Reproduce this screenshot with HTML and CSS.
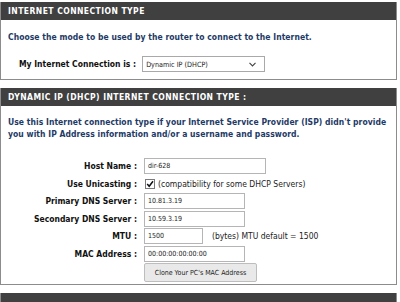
FILE: index.html
```html
<!DOCTYPE html>
<html>
<head>
<meta charset="utf-8">
<link rel="stylesheet" href="styles.css">
</head>
<body>
<div class="page">
  <section class="box">
    <h2 class="box-head">INTERNET CONNECTION TYPE</h2>
    <div class="box-body first">
      <p class="lead">Choose the mode to be used by the router to connect to the Internet.</p>
      <div class="row">
        <label class="lbl">My Internet Connection is :</label>
        <div class="select"><span>Dynamic IP (DHCP)</span><svg class="chev" width="7" height="5" viewBox="0 0 7 5"><path d="M0.5 0.8 L3.5 4 L6.5 0.8" fill="none" stroke="#444" stroke-width="1.1"/></svg></div>
      </div>
    </div>
  </section>

  <section class="box">
    <h2 class="box-head">DYNAMIC IP (DHCP) INTERNET CONNECTION TYPE :</h2>
    <div class="box-body second">
      <p class="lead">Use this Internet connection type if your Internet Service Provider (ISP) didn't provide you with IP Address information and/or a username and password.</p>
      <div class="form">
        <div class="frow"><span class="flbl">Host Name :</span><span class="inp w-host">dir-628</span></div>
        <div class="frow"><span class="flbl">Use Unicasting :</span><span class="chk"><svg width="10" height="10" viewBox="0 0 10 10"><rect x="0.5" y="0.5" width="9" height="9" fill="#fff" stroke="#7a7a7a"/><path d="M2.2 5 L4.2 7.3 L8 2.2" fill="none" stroke="#111" stroke-width="1.5"/></svg></span><span class="note">(compatibility for some DHCP Servers)</span></div>
        <div class="frow"><span class="flbl">Primary DNS Server :</span><span class="inp w-dns">10.81.3.19</span></div>
        <div class="frow"><span class="flbl">Secondary DNS Server :</span><span class="inp w-dns">10.59.3.19</span></div>
        <div class="frow"><span class="flbl">MTU :</span><span class="inp w-mtu">1500</span><span class="note mtu-note">(bytes) MTU default = 1500</span></div>
        <div class="frow"><span class="flbl">MAC Address :</span><span class="inp w-dns">00:00:00:00:00:00</span></div>
        <div class="frow"><span class="flbl"></span><span class="btn">Clone Your PC's MAC Address</span></div>
      </div>
    </div>
  </section>

  <section class="box">
    <h2 class="box-head"></h2>
  </section>
</div>
</body>
</html>
```
FILE: styles.css
```css
html, body {
  margin: 0;
  padding: 0;
  background: #fff;
}
body {
  font-family: "DejaVu Sans Condensed", "DejaVu Sans", sans-serif;
  font-stretch: condensed;
  width: 400px;
  height: 302px;
  overflow: hidden;
}
.page {
  width: 397px;
  padding-top: 2px;
}
.box {
  border: 1px solid #8c8c8c;
  border-top: none;
  margin-bottom: 8px;
  background: #fff;
}
.box-head {
  margin: 0;
  background: #404040;
  color: #fff;
  font-size: 8.5px;
  font-weight: bold;
  letter-spacing: 0.45px;
  height: 18px;
  line-height: 18px;
  padding-left: 7px;
}
.box-body {
  padding: 0 7px;
}
.first {
  height: 59px;
  padding-top: 11px;
  box-sizing: border-box;
}
.lead {
  margin: 0;
  color: #1e3a66;
  font-weight: bold;
  font-size: 8.5px;
  line-height: 12px;
  letter-spacing: 0.05px;
}
.row {
  display: flex;
  align-items: center;
  margin-top: 13px;
  margin-left: 11px;
}
.lbl {
  font-weight: bold;
  font-size: 8.5px;
  color: #111;
  margin-right: 6px;
}
.select {
  width: 123px;
  height: 16px;
  box-sizing: border-box;
  border: 1px solid #a9a9a9;
  display: flex;
  align-items: center;
  justify-content: space-between;
  padding: 0 8px 0 3px;
  font-size: 7.2px;
  color: #222;
}
.second {
  padding-top: 10px;
  padding-bottom: 5px;
}
.form {
  margin-top: 18px;
  display: flex;
  flex-direction: column;
  gap: 1.5px;
}
.frow {
  display: flex;
  align-items: center;
  height: 16px;
}
.flbl {
  width: 129px;
  text-align: right;
  font-weight: bold;
  font-size: 8.5px;
  color: #111;
  margin-right: 7px;
  flex: none;
}
.inp {
  height: 16px;
  box-sizing: border-box;
  border: 1px solid #b5b5b5;
  font-size: 7px;
  color: #222;
  display: flex;
  align-items: center;
  padding-left: 3px;
  flex: none;
}
.w-host { width: 122px; }
.w-dns { width: 101px; }
.w-mtu { width: 59px; }
.chk {
  display: flex;
  align-items: center;
  margin-left: 1px;
}
.note {
  font-size: 8.5px;
  color: #222;
  margin-left: 3px;
}
.mtu-note {
  margin-left: 9px;
}
.btn {
  width: 113px;
  height: 19px;
  box-sizing: border-box;
  border: 1px solid #bdbdbd;
  border-radius: 2px;
  background: #e9e9e9;
  font-size: 7px;
  color: #222;
  display: flex;
  align-items: center;
  justify-content: center;
  margin-top: 3px;
  flex: none;
}
```
